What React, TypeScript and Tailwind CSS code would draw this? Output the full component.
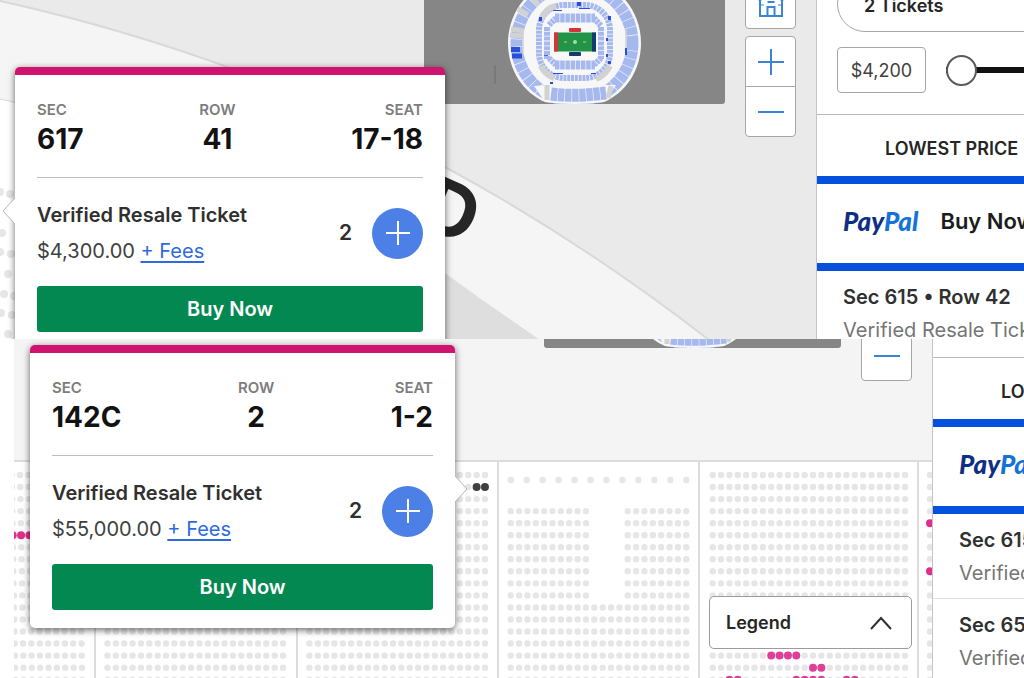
const BLUE = "#a6b9ee"
const SEAT_GREY = "#e6e6e6"
const PITCH_X = 8.36
const PITCH_Y = 12.04

type TicketProps = {
    sec: string
    row: string
    seat: string
    price: string
    pointer: "left" | "right"
    className: string
}

type Seat = { x: number; y: number; color: string }

const Stadium = () => (
    <svg viewBox="0 0 301 170" className="block h-[170px] w-[301px] max-w-none" aria-hidden="true">
        <path d="M150 39 C187 39 217 69 217 106 C217 134 201 156 180 165 Q150 169 121 165 C100 156 84 134 84 106 C84 69 114 39 150 39Z" fill="#f7f7f7" />
        {/* upper deck */}
        <circle cx="150.500" cy="106" r="58" fill="none" stroke={BLUE} strokeWidth="12" strokeDasharray="7.500 .6" />
        <path d="M87 92 L100 94 M86 98 L99 99" stroke="#d2d2d2" strokeWidth="5" />
        <path d="M94 72 L104 78 M107 60 L115 68" stroke="#d2d2d2" strokeWidth="5" />
        <path d="M99 92v24 M202 92v24" stroke="#d2d2d2" strokeWidth="1.500" />
        <path d="M87 110h9v5h-9z M88 116.500h10v5h-10z M201 111h2v7h-2z" fill="#2b50d8" />
        <path d="M110 149 L121 165 Q150 169 180 165 L192 148 L180 148 L122 148Z" fill="#f7f7f7" />
        <path d="M127 157 Q150 160 182 156" fill="none" stroke={BLUE} strokeWidth="13" strokeDasharray="6.500 .6" />
        <path d="M123 148v15 M187 149l-3 12" stroke="#d2d2d2" strokeWidth="5" />
        {/* club level */}
        <rect x="115" y="68" width="71" height="73" rx="25" fill="none" stroke={BLUE} strokeWidth="6" strokeDasharray="3 .8" />
        <path d="M117 83 Q121 71 132 69 M117 129 Q120 137 130 141 M186 129 Q181 139 172 142" fill="none" stroke="#d2d2d2" strokeWidth="6" />
        <path d="M153 65h4v4h-4z M115 80h3v4h-3z M184 79h3v4h-3z M120 117h5v4h-5z M126 145h3v2h-3z M184 124h3v3h-3z M129 73h9v1h-9z M155 71h11v1h-11z M129 136h10v1h-10z M167 136h5v1h-5z M182 101h2v3h-2z M182 117h2v3h-2z" fill="#2b50d8" />
        {/* lower bowl */}
        <rect x="124" y="76" width="54" height="59" rx="14" fill="#f8f8f8" />
        <path d="M131 81h40 M131 128h40" stroke={BLUE} strokeWidth="9" strokeDasharray="4.500 .7" />
        <path d="M125 88l7 -7 M170 81l7 8 M125 121l7 7 M170 128l7 -7" stroke={BLUE} strokeWidth="6" strokeDasharray="3 .7" />
        <path d="M177 90v32 M123 90v32" stroke={BLUE} strokeWidth="6" strokeDasharray="4 .8" />
        <rect x="145" y="91" width="12" height="4" rx="1" fill="#d6343b" />
        <rect x="145" y="115" width="12" height="4" rx="1" fill="#123c70" />
        <rect x="130" y="95.500" width="42" height="19" fill="#219447" />
        <rect x="130" y="95.500" width="4" height="19" fill="#d6343b" />
        <rect x="168" y="95.500" width="4" height="19" fill="#123c70" />
        <circle cx="151" cy="105" r="2" fill="#a9d8b4" />
        <path d="M140 105h3 M159 105h3" stroke="#7fae4d" strokeWidth="2" />
        <path d="M71 128v19" stroke="#6d6d6d" strokeWidth="1" />
    </svg>
)

const MapTools = ({ className, mapClassName }: { className: string; mapClassName: string }) => (
    <div className={`absolute right-5 flex h-[200px] gap-5 ${className}`}>
        <div className={`h-[167px] overflow-hidden rounded-[3px] bg-[#868686] ${mapClassName}`}>
            <Stadium />
        </div>
        <div className="flex w-[51px] flex-col justify-end gap-[7px]">
            <button aria-label="Reset map" className="flex h-[51px] shrink-0 items-center justify-center rounded-sm border border-[#a6a6a6] bg-white">
                <svg viewBox="0 0 26 26" className="h-[26px] w-[26px]" fill="none" stroke="#3a85d3" strokeWidth="2">
                    <path d="M2 9V25H24V9 M1 10L13 1L25 10 M9.500 25V16h7V25 M9.500 11h7" />
                    <path d="M2 14h4 M24 14h-4" strokeWidth="1" />
                </svg>
            </button>
            <div className="flex h-[101px] shrink-0 flex-col divide-y divide-[#a6a6a6] rounded-sm border border-[#a6a6a6] bg-white">
                <button aria-label="Zoom in" className="flex flex-1 items-center justify-center">
                    <svg viewBox="0 0 26 26" className="h-[26px] w-[26px]" stroke="#3a85d3" strokeWidth="2"><path d="M0 13h26M13 0v26" /></svg>
                </button>
                <button aria-label="Zoom out" className="flex flex-1 items-center justify-center">
                    <svg viewBox="0 0 26 26" className="h-[26px] w-[26px]" stroke="#3a85d3" strokeWidth="2"><path d="M0 13h26" /></svg>
                </button>
            </div>
        </div>
    </div>
)

const TicketCard = ({ sec, row, seat, price, pointer, className }: TicketProps) => {
    const facts = [
        { label: "SEC", value: sec, align: "text-left" },
        { label: "ROW", value: row, align: "text-center" },
        { label: "SEAT", value: seat, align: "text-right" },
    ]

    return (
        <article className={`absolute rounded-[5px] border-t-8 border-[#d0136f] bg-white px-[22px] pb-[18px] shadow-[0_2px_7px_rgba(0,0,0,0.6)] ${className}`}>
            <svg
                viewBox="0 0 14 28"
                className={`absolute top-[122px] h-7 w-[14px] ${pointer === "left" ? "right-full" : "left-full -scale-x-100"}`}
                aria-hidden="true"
            >
                <path d="M14 1L2 14L14 27" fill="#fff" stroke="#b5b5b5" strokeWidth="1" />
            </svg>
            <dl className="flex justify-between border-b border-[#bdbdbd] pt-[25px] pb-[19px]">
                {facts.map((fact) => (
                    <div key={fact.label} className={fact.align}>
                        <dt className="text-[15px] leading-5 font-semibold text-[#7d7d7d]">{fact.label}</dt>
                        <dd className="text-[28px] leading-[38px] font-bold text-[#121212]">{fact.value}</dd>
                    </div>
                ))}
            </dl>
            <div className="flex items-center justify-between pt-[19px] pb-[17px]">
                <div>
                    <h2 className="text-xl leading-9 font-semibold text-[#303030]">Verified Resale Ticket</h2>
                    <p className="text-xl leading-9 text-[#404040]">
                        {price} <a href="#fees" className="text-[#2e6be0] underline underline-offset-3">+ Fees</a>
                    </p>
                </div>
                <div className="flex items-center gap-5">
                    <span className="text-[21px] font-semibold text-[#303030]">2</span>
                    <button aria-label="Add tickets" className="flex size-[51px] items-center justify-center rounded-full bg-[#4c80e6]">
                        <svg viewBox="0 0 24 24" className="size-6" stroke="#fff" strokeWidth="2"><path d="M0 12h24M12 0v24" /></svg>
                    </button>
                </div>
            </div>
            <button className="block h-[46px] w-full rounded-[3px] bg-[#048851] text-xl font-semibold text-white">Buy Now</button>
        </article>
    )
}

const PayPalBanner = () => (
    <div className="flex h-[95px] items-center gap-[22px] border-y-8 border-[#0550dc] pb-1 pl-[26px]">
        <span className="font-[Lato] text-[26px] font-black italic text-[#0f2f85]">
            Pay<span className="text-[#1373d9]">Pal</span>
        </span>
        <span className="text-[22px] font-semibold text-[#1c1c1c]">Buy Now</span>
    </div>
)

const Listing = ({ title }: { title: string }) => (
    <li className="h-[85px] border-b border-[#e2e2e2] pt-[10px] pl-[26px]">
        <h3 className="text-xl leading-8 font-semibold text-[#303030]">{title}</h3>
        <p className="text-xl leading-[34px] text-[#757575]">Verified Resale Ticket</p>
    </li>
)

const SortTab = () => (
    <button className="block h-[62px] w-full border-t border-[#b8b8b8] pt-[6px] pl-[68px] text-left text-lg font-semibold text-[#262626]">LOWEST PRICE</button>
)

const UpperMap = () => (
    <svg viewBox="0 0 816 339" className="absolute top-0 left-0 h-[339px] w-[816px]" aria-hidden="true">
        <path d="M-4 0 C160 36 330 98 445 167 Q580 240 709 340 L0 340Z" fill="#f5f5f5" stroke="#d9d9d9" strokeWidth="2" />
        <path d="M-4 98 C120 125 300 180 445 273 L478 297 L543 342 L-4 342Z" fill="#dedede" />
        <path d="M-4 98 L30 106 L30 342 L-4 342Z" fill="#fff" stroke="#d9d9d9" strokeWidth="1" />
        {[[0, 192], [10, 194], [2, 233], [11, 254], [0, 252], [8, 274], [4, 294], [14, 296], [1, 313], [12, 315], [8, 334]].map(([x, y]) => (
            <circle key={`${x}-${y}`} cx={x} cy={y} r="4" fill={SEAT_GREY} />
        ))}
        <text x="415" y="224" transform="rotate(24 415 224)" className="font-[Inter] text-[76px] font-bold" fill="#262626">D</text>
    </svg>
)

// first seat, seat count and sideways drift per row of every block
const blocks = [
    { start: 11.6, count: 9, drift: 0.22 },
    { start: 107.5, count: 22, drift: 0 },
    { start: 309.4, count: 22, drift: 0 },
    { start: 712.7, count: 24, drift: 0 },
    { start: 930, count: 1, drift: 0 },
]

const sold: Record<string, string> = {
    "0-5-0": "#df2f8c", "0-5-1": "#df2f8c", "0-5-2": "#df2f8c",
    "2-1-20": "#3f3f3f", "2-1-21": "#3f3f3f",
    "3-15-7": "#df3f97", "3-15-8": "#df3f97", "3-15-9": "#df3f97", "3-15-10": "#df3f97",
    "3-16-12": "#df3f97", "3-16-13": "#df3f97",
    "3-17-2": "#df3f97", "3-17-3": "#df3f97", "3-17-10": "#df3f97", "3-17-11": "#df3f97",
    "3-17-12": "#df3f97", "3-17-13": "#df3f97", "3-17-16": "#df3f97", "3-17-17": "#df3f97",
    "4-4-0": "#df2f8c", "4-8-0": "#df2f8c",
}

const buildSeats = () => {
    const seats: Seat[] = []
    for (let r = 0; r < 18; r++) {
        const y = 136 + r * PITCH_Y
        blocks.forEach((block, b) => {
            for (let c = 0; c < block.count; c++) {
                seats.push({ x: block.start + r * block.drift + c * PITCH_X, y, color: sold[`${b}-${r}-${c}`] ?? SEAT_GREY })
            }
        })
        if (r < 3) continue
        for (let c = 0; c < 22; c++) {
            if (r < 11 && c > 9 && c < 14) continue
            seats.push({ x: 510.7 + c * PITCH_X, y, color: SEAT_GREY })
        }
    }
    for (let c = 0; c < 12; c++) seats.push({ x: 510.7 + c * 15.96, y: 141, color: SEAT_GREY })
    return seats
}

const SeatMap = () => (
    <svg viewBox="0 0 932 339" className="absolute top-0 left-0 h-[339px] w-[932px]" aria-hidden="true">
        <rect x="14" width="918" height="122" fill="#f4f4f4" />
        <path d="M14 122H932" stroke="#dcdcdc" strokeWidth="2" />
        <path d="M95 122V339M297 122V339M498 122V339M699 122V339M918 122V339" stroke="#dcdcdc" strokeWidth="2" />
        {buildSeats().map((seat, i) => (
            <circle key={i} cx={seat.x} cy={seat.y} r={seat.color === SEAT_GREY ? 3.2 : 4} fill={seat.color} />
        ))}
        <rect width="14" height="339" fill="#fff" />
    </svg>
)

export default function App() {
    return (
        <main className="min-h-screen overflow-hidden bg-white font-[Inter,sans-serif]">
            <section className="flex h-[339px] overflow-hidden">
                <div className="relative min-w-0 flex-1 overflow-hidden bg-[#eaeaea]">
                    <UpperMap />
                    <MapTools className="-top-[63px]" mapClassName="w-[301px]" />
                    <TicketCard sec="617" row="41" seat="17-18" price="$4,300.00" pointer="left" className="top-[67px] left-[15px] w-[430px]" />
                </div>
                <aside className="w-[208px] shrink-0 overflow-hidden border-l border-[#c4c4c4]">
                    <div className="-mt-6 w-[416px]">
                        <div className="px-5">
                            <button className="block h-[56px] w-full rounded-full border border-[#a6a6a6] pt-1 pl-[26px] text-left text-lg font-semibold text-[#262626]">2 Tickets</button>
                        </div>
                        <div className="mb-[6px] flex h-[76px] items-center gap-5 px-5">
                            <input aria-label="Minimum price" defaultValue="$4,200" className="h-[46px] w-[89px] rounded-sm border border-[#a6a6a6] text-center text-lg text-[#404040]" />
                            <input
                                type="range"
                                aria-label="Price range"
                                defaultValue="0"
                                className="h-8 flex-1 appearance-none bg-[linear-gradient(#121212,#121212)] bg-[length:100%_6px] bg-center bg-no-repeat [&::-webkit-slider-thumb]:size-[31px] [&::-webkit-slider-thumb]:appearance-none [&::-webkit-slider-thumb]:rounded-full [&::-webkit-slider-thumb]:border-2 [&::-webkit-slider-thumb]:border-[#5a5a5a] [&::-webkit-slider-thumb]:bg-white"
                            />
                        </div>
                        <SortTab />
                        <PayPalBanner />
                        <ul>
                            <Listing title="Sec 615 • Row 42" />
                        </ul>
                    </div>
                </aside>
            </section>
            <section className="flex h-[339px] overflow-hidden">
                <div className="relative min-w-0 flex-1 overflow-hidden bg-white">
                    <SeatMap />
                    <MapTools className="-top-[158px]" mapClassName="w-[297px]" />
                    <TicketCard sec="142C" row="2" seat="1-2" price="$55,000.00" pointer="right" className="top-[6px] left-[30px] w-[425px]" />
                    <button className="absolute right-5 bottom-[29px] flex h-[53px] w-[203px] items-center justify-between rounded-[5px] border border-[#9c9c9c] bg-white px-4 text-lg font-semibold text-[#262626]">
                        Legend
                        <svg viewBox="0 0 28 28" className="size-7" fill="none" stroke="#303030" strokeWidth="2">
                            <path d="M4 20L14 9L24 20" />
                        </svg>
                    </button>
                </div>
                <aside className="w-[92px] shrink-0 overflow-hidden border-l border-[#c4c4c4]">
                    <div className="w-[416px] pt-[18px]">
                        <SortTab />
                        <PayPalBanner />
                        <ul>
                            <Listing title="Sec 615 • Row 42" />
                            <Listing title="Sec 651 • Row 42" />
                        </ul>
                    </div>
                </aside>
            </section>
        </main>
    )
}
